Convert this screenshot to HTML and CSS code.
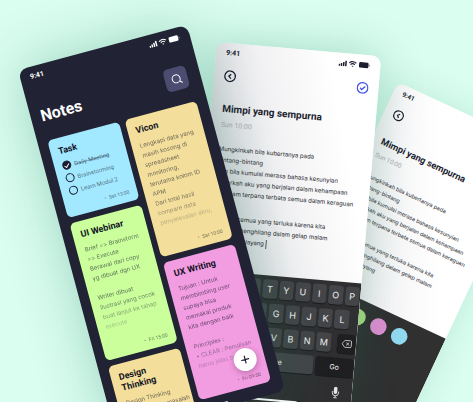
FILE: index.html
```html
<!DOCTYPE html>
<html lang="id">
<head>
<meta charset="utf-8">
<meta name="viewport" content="width=device-width, initial-scale=1">
<title>Notes</title>
<link rel="stylesheet" href="styles.css">
</head>
<body>
<svg class="defs" aria-hidden="true">
  <symbol id="status" viewBox="0 0 32 8">
    <rect x="0" y="5" width="1.5" height="2" rx=".4"/><rect x="2.2" y="4" width="1.5" height="3" rx=".4"/><rect x="4.4" y="2.8" width="1.5" height="4.2" rx=".4"/><rect x="6.6" y="1.4" width="1.5" height="5.6" rx=".4"/>
    <path d="M10.6 3.2a5 5 0 0 1 7 0M12 4.8a3 3 0 0 1 4.200 0" fill="none" stroke="currentColor" stroke-width="1.1"/><path d="M13 5.900h2.200L14.100 7.200z"/>
    <rect x="20.500" y="1.500" width="9.500" height="5.500" rx="1.200"/><rect x="30.500" y="3.300" width=".8" height="1.900" rx=".4" opacity=".6"/>
  </symbol>
  <symbol id="back" viewBox="0 0 12 12"><circle cx="6" cy="6" r="5.300"/><path d="M7 3.800 4.800 6 7 8.200"/></symbol>
  <symbol id="done" viewBox="0 0 12 12"><circle cx="6" cy="6" r="5.300"/><path d="M3.500 6.100 5.300 7.800 8.600 4.300"/></symbol>
</svg>
<main class="canvas">

  <section class="phone editor editor-colors">
    <div class="status"><span>9:41</span><svg class="status-icons"><use href="#status"/></svg></div>
    <div class="toolbar">
      <button class="tool" type="button" aria-label="Back"><svg><use href="#back"/></svg></button>
      <button class="tool tool-done" type="button" aria-label="Done"><svg><use href="#done"/></svg></button>
    </div>
    <article class="page">
      <h2>Mimpi yang sempurna</h2>
      <time>Sun 10:00</time>
      <p>Mungkinkah bila kubertanya pada<br>Bintang-bintang<br>Dan bila kumulai merasa bahasa kesunyian<br>Benarkah aku yang berjalan dalam kehampaan<br>Semalam terpana terbata semua dalam keraguan</p>
      <p>Tentang semua yang terluka karena kita<br>Perlahan menghilang dalam gelap malam<br>Semakin melayang</p>
    </article>
    <div class="swatches">
      <input type="radio" name="color" class="swatch gray" aria-label="Gray">
      <input type="radio" name="color" class="swatch yellow" aria-label="Yellow">
      <input type="radio" name="color" class="swatch green" aria-label="Green">
      <input type="radio" name="color" class="swatch pink" aria-label="Pink">
      <input type="radio" name="color" class="swatch blue" aria-label="Blue">
    </div>
  </section>

  <section class="phone editor editor-typing">
    <div class="status"><span>9:41</span><svg class="status-icons"><use href="#status"/></svg></div>
    <div class="toolbar">
      <button class="tool" type="button" aria-label="Back"><svg><use href="#back"/></svg></button>
      <button class="tool tool-done" type="button" aria-label="Done"><svg><use href="#done"/></svg></button>
    </div>
    <article class="page">
      <h2>Mimpi yang sempurna</h2>
      <time>Sun 10:00</time>
      <p>Mungkinkah bila kubertanya pada<br>Bintang-bintang<br>Dan bila kumulai merasa bahasa kesunyian<br>Benarkah aku yang berjalan dalam kehampaan<br>Semalam terpana terbata semua dalam keraguan</p>
      <p>Tentang semua yang terluka karena kita<br>Perlahan menghilang dalam gelap malam<br>Semakin melayang<span class="caret"></span></p>
    </article>
    <div class="keyboard">
      <div class="keys"><button>Q</button><button>W</button><button>E</button><button>R</button><button>T</button><button>Y</button><button>U</button><button>I</button><button>O</button><button>P</button></div>
      <div class="keys keys-inset"><button>A</button><button>S</button><button>D</button><button>F</button><button>G</button><button>H</button><button>J</button><button>K</button><button>L</button></div>
      <div class="keys keys-shift"><button class="dark" aria-label="Shift">⇧</button><button>Z</button><button>X</button><button>C</button><button>V</button><button>B</button><button>N</button><button>M</button><button class="dark" aria-label="Delete"><svg class="delete" viewBox="0 0 12 10"><path d="M4 1.200h6.200a1 1 0 0 1 1 1v5.600a1 1 0 0 1-1 1H4L.8 5z"/><path d="m5.500 3.400 3.200 3.200m0-3.200L5.500 6.600"/></svg></button></div>
      <div class="keys keys-wide"><button class="dark">123</button><button class="space">space</button><button class="dark">Go</button></div>
      <button class="mic" type="button" aria-label="Dictate"><svg viewBox="0 0 10 13"><rect x="3" y="0" width="4" height="8" rx="2"/><path d="M1.500 5v1.500a3.500 3.500 0 0 0 7 0V5M5 10v2M3 12.300h4" fill="none" stroke="currentColor"/></svg></button>
      <i class="home"></i>
    </div>
  </section>

  <section class="phone list">
    <div class="status"><span>9:41</span><svg class="status-icons"><use href="#status"/></svg></div>
    <header class="head">
      <h1>Notes</h1>
      <button class="search" type="button" aria-label="Search"><svg viewBox="0 0 12 12"><circle cx="5.500" cy="5.500" r="4"/><path d="m8.600 8.600 2 1.800"/></svg></button>
    </header>
    <div class="board">
      <div class="column">
        <article class="note note-short blue">
          <h2>Task</h2>
          <div class="tasks">
            <label><input type="checkbox" checked><s>Daily Meeting</s></label>
            <label><input type="checkbox"><span>Brainstorming</span></label>
            <label><input type="checkbox"><span>Learn Modul 2</span></label>
          </div>
          <time>Sat 13:00</time>
        </article>
        <article class="note green">
          <h2>UI Webinar</h2>
          <p>Brief =&gt; Brainstorm<br>=&gt; Execute<br>Berawal dari copy<br>yg dibuat dgn UX<br><br>Writer dibuat<br>ilustrasi yang cocok<br>buat lanjut ke tahap<br>execute</p>
          <time>Fri 15:00</time>
        </article>
        <article class="note yellow">
          <h2>Design<br>Thinking</h2>
          <p>Design Thinking<br>memecahkan masalah</p>
        </article>
      </div>
      <div class="column">
        <article class="note yellow">
          <h2>Vicon</h2>
          <p>Lengkapi data yang<br>masih kosong di<br>spreadsheet<br>monitoring,<br>terutama kolom ID<br>APM<br>Dari total hasil<br>compare data<br>penyelesaian akru,</p>
          <time>Sat 10:00</time>
        </article>
        <article class="note pink">
          <h2>UX Writing</h2>
          <p>Tujuan : Untuk<br>membimbing user<br>supaya bisa<br>memakai produk<br>kita dengan baik<br><br>Principles :<br>• CLEAR : Penulisan<br>harus jelas bahasa</p>
          <time>Fri 09:00</time>
        </article>
      </div>
    </div>
    <button class="add" type="button" aria-label="Add note"><svg viewBox="0 0 10 10"><path d="M5 1v8M1 5h8"/></svg></button>
    <i class="home"></i>
  </section>

</main>
</body>
</html>
```
FILE: styles.css
```css
* { box-sizing: border-box; }
body {
  margin: 0;
  background: #dafef0;
  font-family: Roboto, "Liberation Sans", sans-serif;
  color: #1d1d30;
}
h1, h2, p { margin: 0; }
button { border: 0; padding: 0; margin: 0; font: inherit; color: inherit; }
svg { display: block; }
.defs { position: absolute; width: 0; height: 0; }

/* Free canvas with three tilted phones */
.canvas { position: relative; height: 100vh; overflow: hidden; }
.phone {
  position: absolute;
  display: flex;
  flex-direction: column;
  transform-origin: 0 0;
  overflow: hidden;
  border-radius: 9px;
}
.list {
  left: 18px; top: 70px;
  width: 175px; height: 379px;
  transform: rotate(-15deg);
  background: #212233;
  color: #fff;
  box-shadow: 0 0 56px rgba(20, 110, 80, .3);
}
.editor { width: 165px; height: 356px; }
.editor-typing {
  left: 217px; top: 42px;
  transform: rotate(5deg);
  background: linear-gradient(75deg, #c9c9cf 15%, #f0f0f2 50%, #fff 80%);
  box-shadow: 0 0 44px rgba(20, 110, 80, .28);
}
.editor-colors {
  left: 398px; top: 82px;
  transform: rotate(25deg) scale(.92);
  background: linear-gradient(65deg, #c6c6cc 8%, #f1f1f3 40%, #fff 65%);
  box-shadow: 0 0 36px rgba(20, 110, 80, .14);
}

.status {
  flex: none;
  display: flex;
  align-items: center;
  justify-content: space-between;
  height: 20px;
  padding: 0 10px;
  font-size: 7px;
  font-weight: 700;
}
.status-icons { width: 32px; height: 8px; fill: currentColor; }

/* Notes list */
.head {
  flex: none;
  display: flex;
  align-items: flex-end;
  justify-content: space-between;
  padding: 18px 13px 15px 10px;
}
.head h1 { font-size: 16px; line-height: 20px; }
.search {
  display: grid;
  place-items: center;
  width: 23px; height: 23px;
  border-radius: 5px;
  background: #4b4c70;
}
.search svg, .add svg { width: 12px; height: 12px; fill: none; stroke: currentColor; stroke-linecap: round; }
.board {
  flex: none;
  display: grid;
  grid-template-columns: 1fr 1fr;
  gap: 6px;
  padding: 0 11px 0 10px;
}
.column { display: flex; flex-direction: column; gap: 6px; min-width: 0; }
.note {
  display: flex;
  flex-direction: column;
  height: 142px;
  padding: 8px 8px 7px 8px;
  border-radius: 5px;
  color: #11121f;
  white-space: nowrap;
}
.note-short { height: 80px; }
.note h2 { font-size: 9px; line-height: 11px; }
.note p {
  margin: 5px -6px 0 0;
  font-family: Inter, "Liberation Sans", sans-serif;
  font-feature-settings: "calt" 0;
  font-size: 6px;
  line-height: 10px;
  color: rgba(20, 20, 40, .62);
  -webkit-mask-image: linear-gradient(#000 60px, rgba(0, 0, 0, .3) 90px);
  mask-image: linear-gradient(#000 60px, rgba(0, 0, 0, .3) 90px);
}
.note time {
  margin-top: auto;
  text-align: right;
  font-size: 5px;
  line-height: 6px;
  color: rgba(20, 20, 40, .65);
}
.note time::before { content: "•"; margin-right: 3px; }
.blue { background: #a2e8ff; }
.green { background: #caff9c; }
.yellow { background: #f3df9b; }
.pink { background: #f29ce1; }

.tasks { display: flex; flex-direction: column; gap: 4px; margin-top: 5px; }
.tasks label {
  display: flex;
  align-items: center;
  gap: 3px;
  height: 9px;
  font-size: 6px;
  color: rgba(20, 20, 40, .62);
}
.tasks input {
  appearance: none;
  width: 9px; height: 9px;
  margin: 0;
  border: 1px solid #1d1d30;
  border-radius: 50%;
}
.tasks s { text-decoration-color: rgba(20, 20, 40, .35); }
.tasks input:checked { display: grid; place-items: center; background: #1d1d30; }
.tasks input:checked::after {
  content: "";
  width: 4px; height: 2px;
  border: solid #fff;
  border-width: 0 0 1px 1px;
  transform: rotate(-45deg);
}
.add {
  position: absolute;
  right: 19px; bottom: 29px;
  display: grid;
  place-items: center;
  width: 23px; height: 23px;
  border-radius: 50%;
  background: #fff;
  color: #1d1d30;
  box-shadow: 0 2px 6px rgba(60, 0, 50, .3);
}
.add svg { width: 9px; height: 9px; stroke-width: 1.3; }
.home {
  position: absolute;
  left: 33%; right: 33%; bottom: 3px;
  height: 2px;
  border-radius: 2px;
  background: #fff;
}

/* Note editor */
.toolbar {
  flex: none;
  display: flex;
  justify-content: space-between;
  padding: 7px 10px 0 10px;
}
.tool { background: none; }
.tool svg { width: 12px; height: 12px; fill: none; stroke: currentColor; stroke-width: 1.3; }
.tool-done { color: #4355e8; }
.page {
  flex: 1;
  padding: 21px 0 0 11px;
  white-space: nowrap;
}
.page h2 { font-size: 10px; line-height: 12px; }
.page time {
  display: block;
  margin: 5px 0 13px;
  font-size: 7px;
  line-height: 10px;
  color: #a9a9ae;
}
.page p {
  font-family: Inter, "Liberation Sans", sans-serif;
  font-size: 6px;
  line-height: 11px;
  color: #222228;
}
.page p + p { margin-top: 14px; }
.caret {
  display: inline-block;
  width: 1px; height: 9px;
  margin-left: 2px;
  background: #55555c;
  vertical-align: middle;
}
.swatches {
  flex: none;
  display: flex;
  gap: 7px;
  height: 125px;
  padding: 10px 9px;
  background: #303031;
}
.swatch { appearance: none; width: 18px; height: 18px; margin: 0; border-radius: 50%; }
.swatch.gray { background: #ddd; }
.swatch.yellow { background: #e0cd8e; }
.swatch.green { background: #a8dc83; }
.swatch.pink { background: #dc8fd1; }
.swatch.blue { background: #90d9f0; }

.keyboard {
  flex: none;
  display: flex;
  flex-direction: column;
  gap: 5px;
  height: 128px;
  padding: 4px 1px;
  background: #2f2f31;
  color: #f2f2f2;
  font-family: Inter, "Liberation Sans", sans-serif;
  font-size: 9px;
}
.keys { display: grid; grid-template-columns: repeat(10, 1fr); gap: 2px; }
.keys button {
  display: grid;
  place-items: center;
  height: 19px;
  border-radius: 3px;
  background: #444548;
  box-shadow: 0 1px 0 #1c1c1e;
}
.keys button.dark { background: #1f1f21; }
.keys-inset { grid-template-columns: repeat(9, 1fr); padding: 0 8px; }
.keys-shift { grid-template-columns: 22px repeat(7, 1fr) 22px; }
.keys-shift .dark:first-child { margin-right: 4px; }
.keys-shift .dark:last-child { margin-left: 4px; }
.keys-wide { grid-template-columns: 38px 1fr 38px; font-size: 7px; }
.delete { width: 11px; height: 9px; fill: none; stroke: currentColor; stroke-width: .8; }
.mic { align-self: flex-end; margin: 5px 11px 0 0; background: none; color: #e4e4e4; }
.mic svg { width: 9px; height: 12px; fill: currentColor; }
```
